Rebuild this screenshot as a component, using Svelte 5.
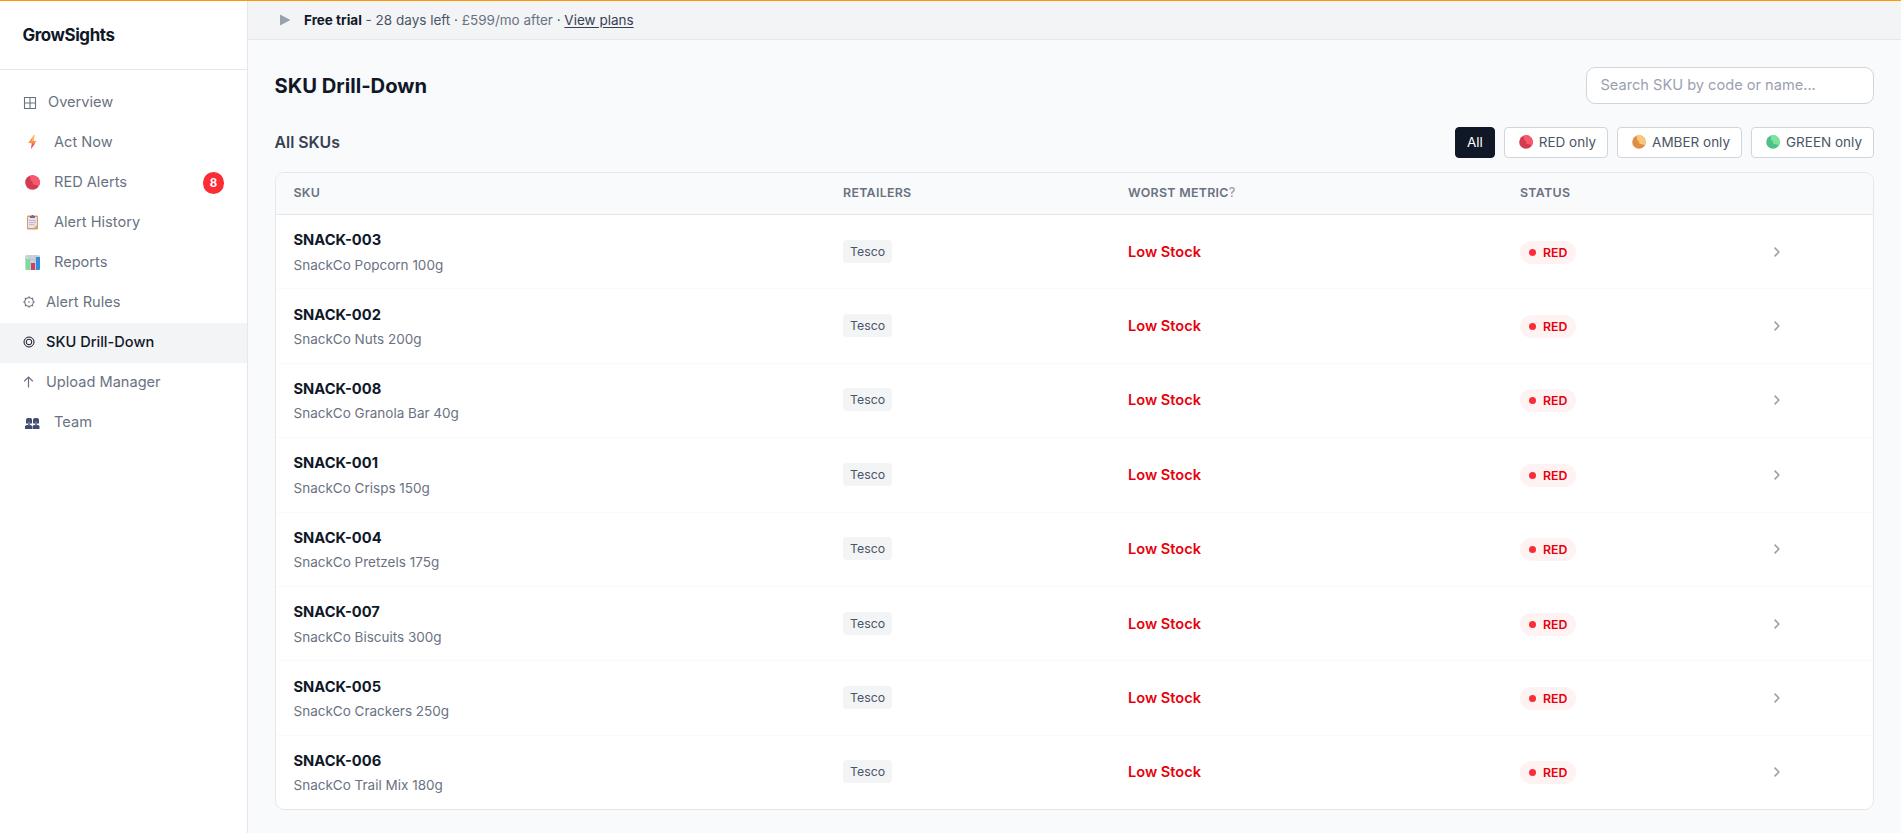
<script lang="ts">
    type NavItem = { label: string; icon: string; size: string; badge?: number };

    const navItems: NavItem[] = [
        { label: 'Overview', icon: 'grid', size: 'medium' },
        { label: 'Act Now', icon: 'bolt', size: 'large' },
        { label: 'RED Alerts', icon: 'red', size: 'large', badge: 8 },
        { label: 'Alert History', icon: 'clipboard', size: 'large' },
        { label: 'Reports', icon: 'chart', size: 'large' },
        { label: 'Alert Rules', icon: 'gear', size: 'small' },
        { label: 'SKU Drill-Down', icon: 'target', size: 'small' },
        { label: 'Upload Manager', icon: 'upload', size: 'small' },
        { label: 'Team', icon: 'team', size: 'large' },
    ];

    const filters = [
        { id: 'all', label: 'All' },
        { id: 'red', label: 'RED only', light: '#f8596b', dark: '#d33a4f' },
        { id: 'amber', label: 'AMBER only', light: '#fcc57c', dark: '#dd9045' },
        { id: 'green', label: 'GREEN only', light: '#7ae59a', dark: '#4fc08a' },
    ];

    const skus = [
        { code: 'SNACK-003', name: 'SnackCo Popcorn 100g' },
        { code: 'SNACK-002', name: 'SnackCo Nuts 200g' },
        { code: 'SNACK-008', name: 'SnackCo Granola Bar 40g' },
        { code: 'SNACK-001', name: 'SnackCo Crisps 150g' },
        { code: 'SNACK-004', name: 'SnackCo Pretzels 175g' },
        { code: 'SNACK-007', name: 'SnackCo Biscuits 300g' },
        { code: 'SNACK-005', name: 'SnackCo Crackers 250g' },
        { code: 'SNACK-006', name: 'SnackCo Trail Mix 180g' },
    ];

    let activePage = $state('SKU Drill-Down');
    let activeFilter = $state('all');
    let search = $state('');

    // every SKU is RED at the moment, so the other filters leave the table empty
    let visible = $derived(
        skus.filter((s) =>
            (activeFilter === 'all' || activeFilter === 'red') &&
            (s.code + ' ' + s.name).toLowerCase().includes(search.toLowerCase())
        )
    );
</script>

{#snippet ball(light: string, dark: string)}
    <circle cx="7.5" cy="7.5" r="7.3" fill={dark} />
    <path d="M5 .7 A7.3 7.3 0 0 1 14 11 L10.5 10 L8 9.5 L7.5 7 L5.5 5 Z" fill={light} />
{/snippet}

{#snippet navIcon(name: string)}
    {#if name === 'grid'}
        <svg width="14" height="14" viewBox="0 0 14 14" fill="none" stroke="currentColor" stroke-width="1.1">
            <path d="M1.5 1.5h11v11h-11zM7 1.5v11M1.5 7h11" />
        </svg>
    {:else if name === 'bolt'}
        <svg width="20" height="16" viewBox="0 0 20 16">
            <path d="M11 1 L5 9 L9 9 L8 15 L13.5 7 L10.5 7 L11.5 1 Z" fill="#f9964b" />
            <path d="M7.5 9 L9 9 L8 15 L12 9.5 Z" fill="#ee5565" />
            <path d="M11 1 L9.2 3.5 L9 7 L10.5 7 L11.5 1 Z" fill="#fbb969" />
        </svg>
    {:else if name === 'red'}
        <svg class="ball" width="15" height="15" viewBox="0 0 15 15">
            {@render ball('#f8596b', '#d33a4f')}
        </svg>
    {:else if name === 'clipboard'}
        <svg width="20" height="16" viewBox="0 0 20 16">
            <rect x="4" y="1.5" width="11" height="14" rx="1" fill="#d99a66" />
            <path d="M5 3h9v8.5l-2.5 2.5H5z" fill="#e6e0f0" />
            <path d="M14 11.5l-2.5 2.5v-2.5z" fill="#f6c08c" />
            <path d="M7 2h5v2H7zM8.5 1h2v1h-2z" fill="#746b80" />
            <path d="M6 6.5h7M6 8.5h7M6 10.5h5" stroke="#c0bccb" />
        </svg>
    {:else if name === 'chart'}
        <svg class="ball" width="15" height="15" viewBox="0 0 15 15">
            <rect width="15" height="15" rx="1.5" fill="#ccd2d6" />
            <path d="M0 4.5h15M0 9h15M5 0v15M10 0v15" stroke="#b5bdc3" stroke-width=".6" />
            <path d="M1 4h4v11H1z" fill="#79df96" />
            <path d="M6 8h4v7H6z" fill="#cf3d69" />
            <path d="M11 2h4v11.5a1.5 1.5 0 0 1-1.5 1.5H11z" fill="#318ddb" />
        </svg>
    {:else if name === 'gear'}
        <svg width="12" height="12" viewBox="0 0 12 12" fill="none" stroke="currentColor" stroke-width="1.1">
            <circle cx="6" cy="6" r="4.300" />
            <circle cx="6" cy="6" r=".8" fill="currentColor" stroke="none" />
            <path d="M6 .2v1.500M6 10.300v1.500M.2 6h1.500M10.300 6h1.500M1.900 1.900l1 1M9.100 9.100l1 1M1.900 10.100l1-1M9.100 2.900l1-1" />
        </svg>
    {:else if name === 'target'}
        <svg width="12" height="12" viewBox="0 0 12 12" fill="none" stroke="currentColor">
            <circle cx="6" cy="6" r="5" />
            <circle cx="6" cy="6" r="2.800" />
        </svg>
    {:else if name === 'upload'}
        <svg width="12" height="12" viewBox="0 0 12 12" fill="none" stroke="currentColor" stroke-width="1.2">
            <path d="M5.5 11.5V1.2M1.200 5.300l4.300-4.200 4.300 4.200" />
        </svg>
    {:else if name === 'team'}
        <svg class="ball" width="15" height="13" viewBox="0 0 15 13">
            <g fill="#414a70">
                <path d="M1 3Q1 1 3 1h2.500Q7 1 7 3v3.500H1zM0 12V9.500Q0 8 2 8h3.500Q7 8 7 9.500V12z" />
                <path d="M8 3q0-2 2-2h2q2 0 2 2v3.500H8zM7.500 12V9.500Q7.500 8 9.500 8H13q1.500 0 1.500 1.500V12z" />
            </g>
            <path d="M3 4.500h2v4H3zM10 4.500h2v4h-2z" fill="#6d7592" />
        </svg>
    {/if}
{/snippet}

<div class="app">
    <aside class="sidebar">
        <div class="brand">GrowSights</div>
        <nav>
            {#each navItems as item}
                <button
                    class="nav-item"
                    class:active={item.label === activePage}
                    onclick={() => (activePage = item.label)}
                >
                    <span class="nav-icon {item.size} {item.icon}">{@render navIcon(item.icon)}</span>
                    <span>{item.label}</span>
                    {#if item.badge}
                        <span class="badge">{item.badge}</span>
                    {/if}
                </button>
            {/each}
        </nav>
    </aside>

    <div class="content">
        <div class="trial">
            <svg width="11" height="12" viewBox="0 0 11 12"><path d="M0 .5 L10.5 6 L0 11.500z" fill="#99a1af" /></svg>
            <div>
                <strong>Free trial</strong> - 28 days left · <span class="price">£599/mo after</span> · <a href="#plans">View plans</a>
            </div>
        </div>

        <main>
            <header class="page-head">
                <h1>SKU Drill-Down</h1>
                <input type="text" placeholder="Search SKU by code or name..." bind:value={search} />
            </header>

            <div class="toolbar">
                <h2>All SKUs</h2>
                <div class="filters">
                    {#each filters as filter}
                        <button
                            class="filter"
                            class:selected={filter.id === activeFilter}
                            onclick={() => (activeFilter = filter.id)}
                        >
                            {#if filter.light}
                                <svg width="14" height="14" viewBox="0 0 15 15">{@render ball(filter.light, filter.dark)}</svg>
                            {/if}
                            {filter.label}
                        </button>
                    {/each}
                </div>
            </div>

            <div class="card">
                <div class="row head">
                    <div>SKU</div>
                    <div>RETAILERS</div>
                    <div>WORST METRIC<span class="hint">?</span></div>
                    <div>STATUS</div>
                    <div></div>
                </div>
                {#each visible as sku (sku.code)}
                    <div class="row">
                        <div>
                            <div class="code">{sku.code}</div>
                            <div class="name">{sku.name}</div>
                        </div>
                        <div><span class="tag">Tesco</span></div>
                        <div class="metric">Low Stock</div>
                        <div><span class="status"><i></i>RED</span></div>
                        <div class="chevron">
                            <svg width="6" height="10" viewBox="0 0 6 10" fill="none" stroke="currentColor" stroke-width="1.600">
                                <path d="M.6.600 L4.800 5 L.6 9.400" />
                            </svg>
                        </div>
                    </div>
                {/each}
            </div>
        </main>
    </div>
</div>

<style>
    :global(body) {
        margin: 0;
        background: #f9fafb;
    }

    .app {
        display: flex;
        height: 833px;
        box-sizing: border-box;
        border-top: 1px solid #fe9a00;
        font-family: Inter, sans-serif;
        color: #101828;
        background: #f9fafb;
        overflow: hidden;
    }

    button,
    input {
        font-family: inherit;
        box-sizing: border-box;
    }

    .sidebar {
        width: 248px;
        flex-shrink: 0;
        box-sizing: border-box;
        background: #fff;
        border-right: 1px solid #e5e7eb;
    }

    .brand {
        height: 69px;
        box-sizing: border-box;
        padding: 22px 22.5px 0;
        border-bottom: 1px solid #e5e7eb;
        font-size: 16.9px;
        line-height: 25px;
        font-weight: 650;
        letter-spacing: -0.4px;
    }

    nav {
        padding-top: 13px;
    }

    .nav-item {
        display: flex;
        align-items: center;
        width: 100%;
        height: 40px;
        padding: 0 23px 2px;
        border: 0;
        background: none;
        color: #6a7282;
        font-size: 14.6px;
        text-align: left;
        cursor: pointer;
    }

    .nav-item.active {
        background: #f3f4f6;
        color: #101828;
        font-weight: 450;
    }

    .nav-icon {
        display: flex;
        align-items: center;
        flex-shrink: 0;
    }

    .nav-icon.small { width: 23px; }
    .nav-icon.medium { width: 25px; }
    .nav-icon.large { width: 31px; }

    .nav-icon.grid,
    .nav-icon.team {
        padding-top: 2px;
    }

    .ball {
        margin-left: 2px;
    }

    .badge {
        display: flex;
        align-items: center;
        justify-content: center;
        width: 21px;
        height: 22px;
        margin: 2px 0 0 auto;
        border-radius: 11px;
        background: #fb2c36;
        color: #fff;
        font-size: 11.5px;
        font-weight: 700;
    }

    .content {
        flex: 1;
        min-width: 0;
    }

    .trial {
        display: flex;
        align-items: center;
        gap: 13px;
        height: 39px;
        box-sizing: border-box;
        padding: 0 32px;
        border-bottom: 1px solid #e5e7eb;
        background: #f3f4f6;
        color: #4a5565;
        font-size: 13.5px;
    }

    .trial strong {
        font-weight: 650;
        color: #101828;
    }

    .trial a {
        color: #364153;
        text-underline-offset: 2px;
    }

    .price {
        color: #6a7282;
    }

    main {
        padding: 27px;
    }

    .page-head,
    .toolbar {
        display: flex;
        align-items: center;
        justify-content: space-between;
    }

    h1 {
        margin: 0 0 0 -0.5px;
        font-size: 20.2px;
        font-weight: 650;
    }

    input {
        width: 288px;
        height: 37px;
        padding: 0 14px 1px 13.5px;
        border: 1px solid #d1d5dc;
        border-radius: 9px;
        background: #fff;
        font-size: 14.6px;
        outline: none;
    }

    input::placeholder {
        color: #99a1af;
    }

    .toolbar {
        margin: 23px 0 14px;
    }

    h2 {
        margin: 0 0 0 -0.5px;
        padding-bottom: 1px;
        color: #364153;
        font-size: 15.8px;
        font-weight: 570;
    }

    .filters {
        display: flex;
        gap: 9px;
    }

    .filter {
        display: flex;
        align-items: center;
        gap: 6px;
        height: 31px;
        padding: 0 11px 1px 14px;
        border: 1px solid #d1d5dc;
        border-radius: 4px;
        background: #fff;
        color: #4a5565;
        font-size: 13.5px;
        cursor: pointer;
    }

    .filter.selected {
        padding: 0 11px 1px;
        border-color: #101828;
        background: #101828;
        color: #fff;
    }

    .card {
        border: 1px solid #e5e7eb;
        border-radius: 9px;
        background: #fff;
        overflow: hidden;
    }

    .row {
        display: grid;
        grid-template-columns: 549.5px 285px 392px 254px 1fr;
        align-items: center;
        height: 74.4px;
        box-sizing: border-box;
        padding-left: 17.5px;
        border-bottom: 1px solid #f9fafb;
    }

    .row:last-child {
        height: 73.5px;
        border-bottom: 0;
    }

    .row.head {
        height: 42px;
        padding-bottom: 2px;
        border-bottom: 1px solid #e5e7eb;
        background: #f9fafb;
        color: #6a7282;
        font-size: 12.4px;
        font-weight: 580;
        letter-spacing: 0.3px;
    }

    .hint {
        color: #99a1af;
        font-weight: 500;
    }

    .code {
        font-size: 14.7px;
        line-height: 24px;
        font-weight: 650;
    }

    .name {
        color: #6a7282;
        font-size: 13.5px;
        line-height: 20px;
        margin: 2.5px 0 0.5px;
    }

    .tag {
        display: inline-block;
        padding: 0 7px;
        border-radius: 4px;
        background: #f3f4f6;
        color: #4a5565;
        font-size: 12.3px;
        line-height: 23px;
        margin-bottom: 1px;
    }

    .metric {
        color: #e7000b;
        font-size: 14.6px;
        font-weight: 580;
    }

    .status {
        display: inline-flex;
        align-items: center;
        gap: 7px;
        height: 23px;
        padding: 0 9px;
        border-radius: 12px;
        background: #fef2f2;
        color: #e7000b;
        font-size: 12.3px;
        font-weight: 580;
    }

    .status i {
        width: 7px;
        height: 7px;
        border-radius: 50%;
        background: #fb2c36;
    }

    .chevron {
        display: flex;
        color: #99a1af;
    }
</style>
